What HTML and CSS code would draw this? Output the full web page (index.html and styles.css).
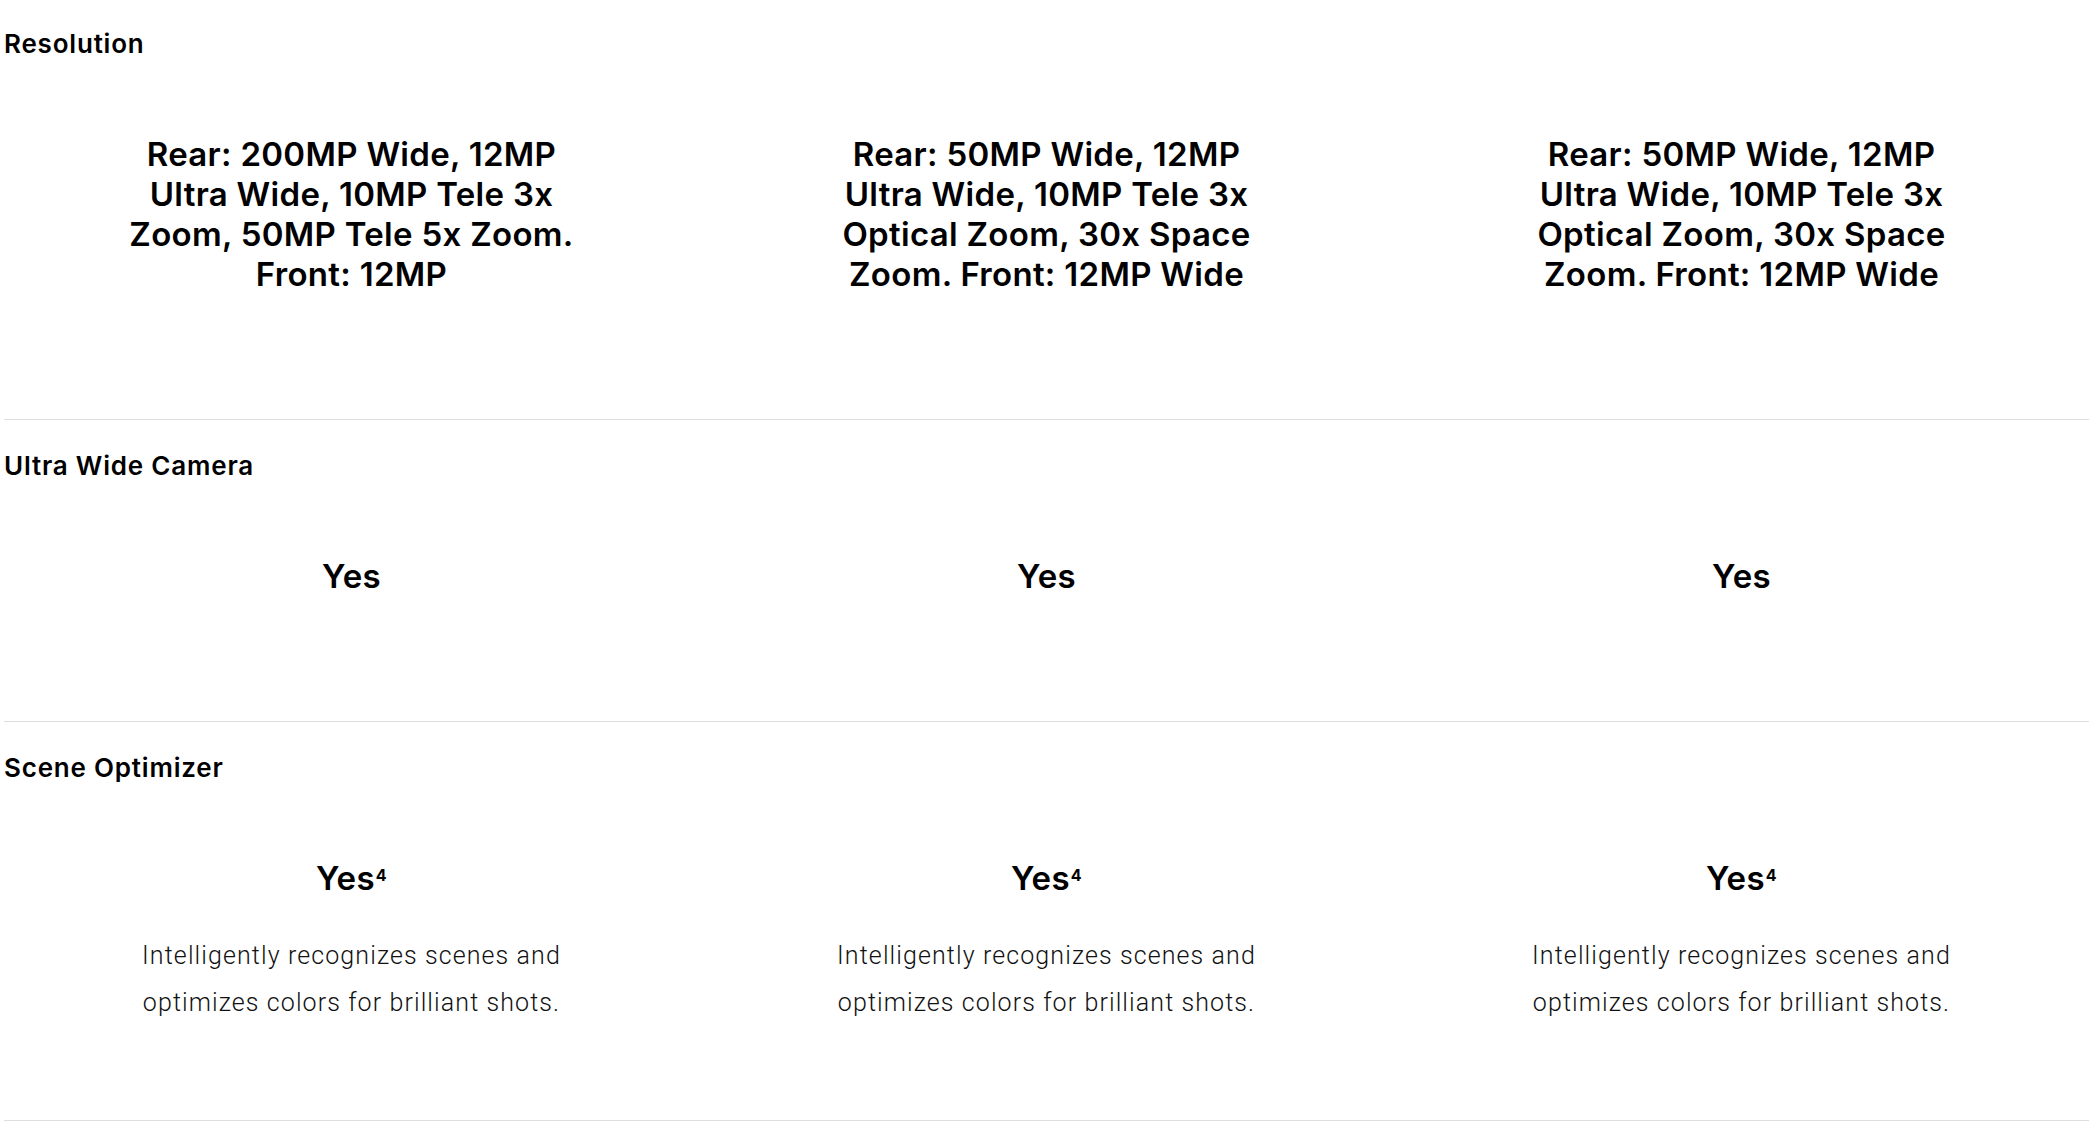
FILE: index.html
```html
<!DOCTYPE html>
<html lang="en">
<head>
<meta charset="utf-8">
<title>Camera specs</title>
<link rel="stylesheet" href="styles.css">
</head>
<body>
<div class="specs">
  <section class="row row-first">
    <h3 class="label">Resolution</h3>
    <div class="cols">
      <div class="cell"><p class="value">Rear: 200MP Wide, 12MP Ultra Wide, 10MP Tele 3x Zoom, 50MP Tele 5x Zoom. Front: 12MP</p></div>
      <div class="cell"><p class="value">Rear: 50MP Wide, 12MP Ultra Wide, 10MP Tele 3x Optical Zoom, 30x Space Zoom. Front: 12MP Wide</p></div>
      <div class="cell"><p class="value">Rear: 50MP Wide, 12MP Ultra Wide, 10MP Tele 3x Optical Zoom, 30x Space Zoom. Front: 12MP Wide</p></div>
    </div>
  </section>
  <section class="row">
    <h3 class="label">Ultra Wide Camera</h3>
    <div class="cols">
      <div class="cell"><p class="value">Yes</p></div>
      <div class="cell"><p class="value">Yes</p></div>
      <div class="cell"><p class="value">Yes</p></div>
    </div>
  </section>
  <section class="row row-desc">
    <h3 class="label">Scene Optimizer</h3>
    <div class="cols">
      <div class="cell"><p class="value">Yes<sup class="note">4</sup></p><p class="desc">Intelligently recognizes scenes and optimizes colors for brilliant shots.</p></div>
      <div class="cell"><p class="value">Yes<sup class="note">4</sup></p><p class="desc">Intelligently recognizes scenes and optimizes colors for brilliant shots.</p></div>
      <div class="cell"><p class="value">Yes<sup class="note">4</sup></p><p class="desc">Intelligently recognizes scenes and optimizes colors for brilliant shots.</p></div>
    </div>
  </section>
</div>
</body>
</html>
```

FILE: styles.css
```css
html, body {
  margin: 0;
  padding: 0;
  background: #ffffff;
}

body {
  font-family: "Inter", "Liberation Sans", sans-serif;
  color: #000000;
}

.specs {
  padding-left: 4px;
}

.row {
  border-bottom: 1px solid #dddddd;
  padding: 31px 0 125px;
}

.row-first {
  margin-top: -2px;
}

.row-desc {
  padding-bottom: 94px;
}

.label {
  margin: 0 0 75px;
  font-size: 26px;
  line-height: 30px;
  font-weight: 600;
  letter-spacing: 0.8px;
}

.cols {
  display: grid;
  grid-template-columns: repeat(3, 1fr);
}

.cell {
  display: flex;
  flex-direction: column;
  align-items: center;
  text-align: center;
}

.value {
  margin: 0;
  max-width: 462px;
  font-size: 33px;
  line-height: 40px;
  font-weight: 600;
  letter-spacing: 0.3px;
}

.note {
  font-size: 16px;
  font-weight: 700;
  line-height: 0;
  vertical-align: 9px;
  margin-left: 1px;
}

.desc {
  margin: 34px 0 0;
  max-width: 440px;
  font-family: "Roboto", "Liberation Sans", sans-serif;
  font-weight: 300;
  font-size: 25px;
  line-height: 47px;
  letter-spacing: 1.1px;
  color: #111111;
}
```
